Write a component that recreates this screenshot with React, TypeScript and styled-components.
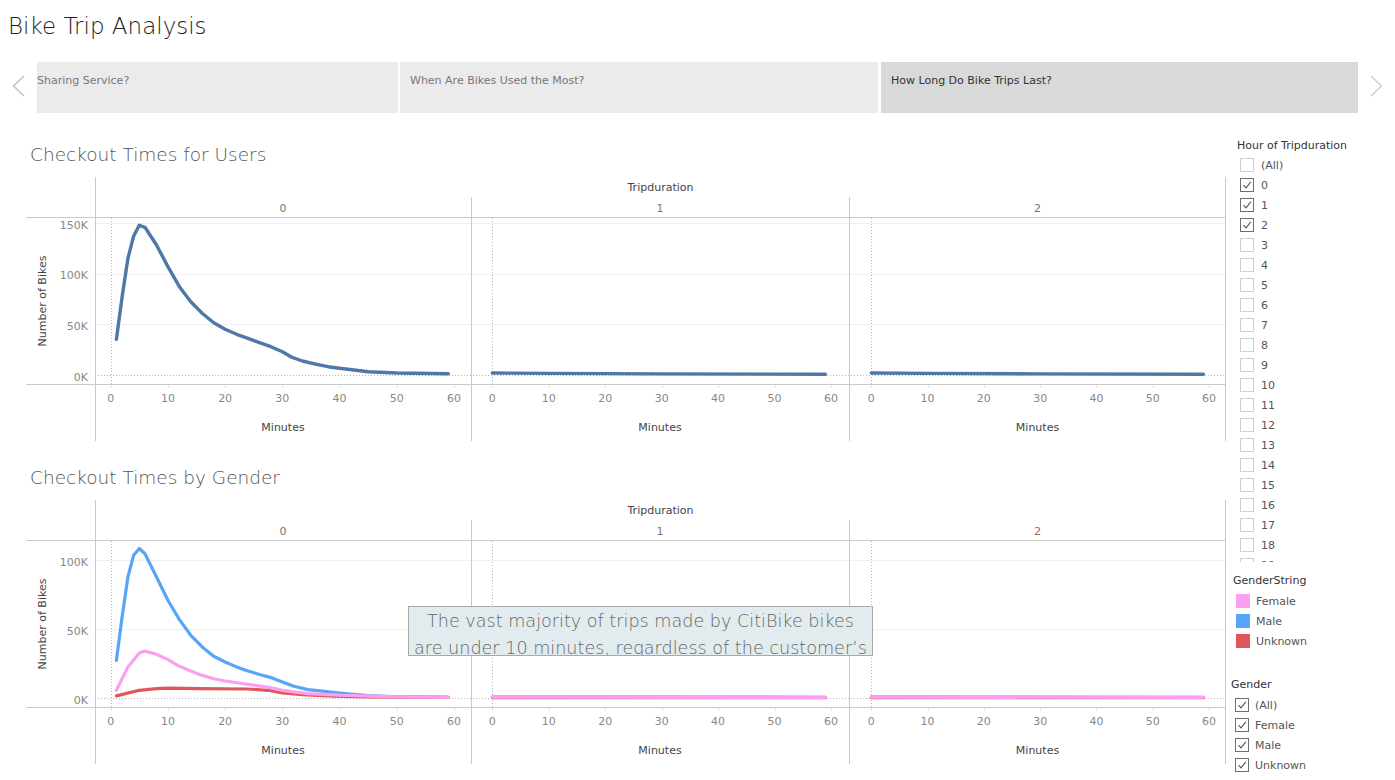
import React from 'react';
import styled, { createGlobalStyle } from 'styled-components';

const FONT = `"DejaVu Sans", Verdana, "Noto Sans", sans-serif`;

const GlobalStyle = createGlobalStyle`
  html, body { margin: 0; padding: 0; background: #ffffff; }
  body {
    font-family: ${FONT};
    color: #333;
    width: 1395px;
    height: 780px;
    overflow: hidden;
  }
  #root { width: 1395px; height: 780px; }
`;

const Page = styled.div`
  width: 1395px;
  height: 780px;
  overflow: hidden;
  display: flex;
  flex-direction: column;
`;

const Header = styled.header`
  height: 62px;
  flex: none;
`;

const Title = styled.h1`
  margin: 0;
  padding: 12px 0 0 8px;
  font-size: 23px;
  line-height: 28px;
  font-weight: 300;
  color: #222;
`;

const StoryNav = styled.nav`
  height: 51px;
  flex: none;
  display: flex;
  align-items: stretch;
`;

const NavArrow = styled.div`
  width: 37px;
  flex: none;
  display: flex;
  align-items: center;
  justify-content: center;
  padding-bottom: 4px;
  box-sizing: border-box;
`;

const StoryTab = styled.div<{ $w: number; $active?: boolean; $gap: number; $pad: number }>`
  width: ${(p) => p.$w}px;
  margin-left: ${(p) => p.$gap}px;
  flex: none;
  box-sizing: border-box;
  padding: 11px 0 0 ${(p) => p.$pad}px;
  background: ${(p) => (p.$active ? '#d9d9d9' : '#ebebeb')};
  color: ${(p) => (p.$active ? '#333' : '#777')};
  font-size: 11px;
  line-height: 16px;
  white-space: nowrap;
  overflow: hidden;
`;

const Main = styled.main`
  flex: 1;
  display: flex;
  min-height: 0;
`;

const ChartsColumn = styled.section`
  width: 1226px;
  flex: none;
  box-sizing: border-box;
  padding: 31px 0 0 26px;
  display: flex;
  flex-direction: column;
`;

const ChartBlock = styled.div<{ $top: number }>`
  margin-top: ${(p) => p.$top}px;
  display: flex;
  flex-direction: column;
  gap: 11px;
`;

const ChartTitle = styled.h2`
  margin: 0 0 0 4px;
  font-size: 18.5px;
  line-height: 22px;
  font-weight: 300;
  color: #555;
  white-space: nowrap;
`;

const ChartFrame = styled.div`
  position: relative;
  width: 1200px;
  height: 264px;
`;

const ChartSvg = styled.svg`
  display: block;
  font-family: ${FONT};
`;

const Annotation = styled.div`
  position: absolute;
  left: 382px;
  top: 106px;
  width: 465px;
  height: 50px;
  box-sizing: border-box;
  padding-top: 1px;
  background: #e2ecef;
  border: 1px solid #a9a9a9;
  color: #666;
  font-size: 17.6px;
  line-height: 27px;
  font-weight: 300;
  text-align: center;
  overflow: hidden;
`;

const Sidebar = styled.aside`
  flex: 1;
  display: flex;
  flex-direction: column;
  padding-top: 25px;
`;

const FilterTitle = styled.div<{ $indent: number; $top?: number }>`
  padding-left: ${(p) => p.$indent}px;
  margin-top: ${(p) => p.$top ?? 0}px;
  font-size: 11px;
  line-height: 16px;
  color: #333;
  white-space: nowrap;
  flex: none;
`;

const FilterList = styled.div<{ $indent: number; $height?: number; $top: number }>`
  padding-left: ${(p) => p.$indent}px;
  margin-top: ${(p) => p.$top}px;
  ${(p) => (p.$height ? `height: ${p.$height}px; overflow: hidden;` : '')}
  flex: none;
  display: flex;
  flex-direction: column;
`;

const FilterRow = styled.div<{ $gap: number }>`
  height: 20px;
  flex: none;
  display: flex;
  align-items: center;
  gap: ${(p) => p.$gap}px;
  font-size: 11px;
  color: #555;
  white-space: nowrap;
`;

const Box = styled.span<{ $checked: boolean }>`
  width: 14px;
  height: 14px;
  box-sizing: border-box;
  flex: none;
  border: 1px solid ${(p) => (p.$checked ? '#6e6e6e' : '#cfcfcf')};
  background: #fff;
  display: flex;
  align-items: center;
  justify-content: center;
`;

const Swatch = styled.span<{ $color: string }>`
  width: 14px;
  height: 14px;
  flex: none;
  background: ${(p) => p.$color};
`;

/* ---------------- chart ---------------- */

type Pt = [number, number];
type Series = { color: string; width: number; points: Pt[] };
type Pane = { label: string; x0: number; x60: number; series: Series[] };

const EDGES = [69, 445, 823, 1200];
const BASE = 198;

const LINE = '#c9c9c9';

function Facets({ panes, ticks, scale }: { panes: Pane[]; ticks: number[]; scale: number }) {
  const y = (v: number) => BASE - v * scale;
  return (
    <ChartSvg width={1200} height={264} viewBox="0 0 1200 264">
      {ticks
        .filter((t) => t > 0)
        .map((t) => (
          <line key={t} x1={69} x2={1200} y1={Math.round(y(t)) + 0.5} y2={Math.round(y(t)) + 0.5} stroke="#efefef" />
        ))}
      <line x1={69} x2={1200} y1={BASE + 0.5} y2={BASE + 0.5} stroke="#b5b5b5" strokeDasharray="1 2" />
      {ticks.map((t) => (
        <text key={t} x={62} y={y(t) + 2} textAnchor="end" dominantBaseline="central" fontSize={11} fill="#888">
          {t}K
        </text>
      ))}
      <text
        transform={`translate(16,124) rotate(-90)`}
        textAnchor="middle"
        dominantBaseline="central"
        fontSize={11}
        fill="#444"
      >
        Number of Bikes
      </text>
      <text x={634.5} y={10} textAnchor="middle" dominantBaseline="central" fontSize={11} fill="#444">
        Tripduration
      </text>
      {panes.map((p, i) => {
        const left = EDGES[i];
        const right = EDGES[i + 1];
        const sx = (m: number) => p.x0 + ((p.x60 - p.x0) * m) / 60;
        const zx = Math.round(sx(0)) + 0.5;
        return (
          <g key={i}>
            <text x={(left + right) / 2} y={31} textAnchor="middle" dominantBaseline="central" fontSize={11} fill="#777">
              {p.label}
            </text>
            <line x1={zx} x2={zx} y1={41} y2={207} stroke="#b5b5b5" strokeDasharray="1 2" />
            {[0, 10, 20, 30, 40, 50, 60].map((m) => (
              <g key={m}>
                <line x1={Math.round(sx(m)) + 0.5} x2={Math.round(sx(m)) + 0.5} y1={208} y2={211} stroke="#e2e2e2" />
                <text x={sx(m)} y={221} textAnchor="middle" dominantBaseline="central" fontSize={11} fill="#888">
                  {m}
                </text>
              </g>
            ))}
            <text x={(left + right) / 2} y={250} textAnchor="middle" dominantBaseline="central" fontSize={11} fill="#444">
              Minutes
            </text>
            {p.series.map((s, k) => (
              <polyline
                key={k}
                points={s.points.map(([m, v]) => `${sx(m).toFixed(1)},${y(v).toFixed(1)}`).join(' ')}
                fill="none"
                stroke={s.color}
                strokeWidth={s.width}
                strokeLinejoin="round"
                strokeLinecap="round"
              />
            ))}
          </g>
        );
      })}
      <line x1={69.5} x2={69.5} y1={0} y2={264} stroke={LINE} />
      <line x1={445.5} x2={445.5} y1={20} y2={264} stroke={LINE} />
      <line x1={823.5} x2={823.5} y1={20} y2={264} stroke={LINE} />
      <line x1={1199.5} x2={1199.5} y1={0} y2={264} stroke={LINE} />
      <line x1={0} x2={1200} y1={40.5} y2={40.5} stroke={LINE} />
      <line x1={0} x2={1200} y1={207.5} y2={207.5} stroke={LINE} />
    </ChartSvg>
  );
}

/* ---------------- data ---------------- */

const BLUE = '#4e79a7';
const MALE = '#58a4f6';
const FEMALE = '#fb9ff0';
const UNKNOWN = '#e15759';

const userPane0: Pt[] = [
  [1, 35.2], [2, 77], [3, 115], [4, 137], [5, 147.8], [6, 145.8], [7, 137], [8, 128.3],
  [10, 107], [12, 87.2], [14, 72.3], [16, 60.9], [18, 51.6], [20, 45.1], [22, 40.2],
  [24, 36.2], [26, 31.9], [28, 27.9], [30, 23], [31.5, 18], [33.5, 13.8], [36, 10.6],
  [38, 8.2], [40, 6.6], [42.5, 4.9], [45, 3.3], [47, 2.7], [50, 2], [59, 1.3],
];
const userFlat: Pt[] = [[0, 2], [10, 1.6], [30, 1.1], [59, 0.7]];

const male0: Pt[] = [
  [1, 27.3], [2, 58.7], [3, 87.7], [4, 103.4], [5, 108.3], [6, 104.6], [8, 87.7], [10, 70.8],
  [12, 56.8], [14, 45.4], [16, 37], [18, 30.2], [20, 26.1], [22, 22.5], [24, 19.6], [26, 17],
  [28, 14.8], [30, 11.6], [32, 8.5], [34.5, 6.1], [37, 4.9], [40, 3.6], [45, 1.7], [50, 0.9], [59, 0.4],
];
const female0: Pt[] = [
  [1, 5.6], [3, 22.5], [5, 32.6], [6, 34], [8, 31.7], [10, 27.8], [12, 23], [14, 19.6],
  [16, 16.4], [18, 14], [20, 12.3], [24, 9.9], [28, 7.5], [30, 5.6], [34.5, 3.2], [40, 2],
  [50, 0.9], [59, 0.4],
];
const unknown0: Pt[] = [
  [1, 1.5], [5, 5.6], [8, 6.8], [10, 7.2], [15.5, 6.8], [24, 6.5], [27.5, 5.6], [30, 3.6],
  [33.5, 2.5], [39, 1.4], [45, 0.9], [59, 0.4],
];
const flatMale: Pt[] = [[0, 0.9], [59, 0.5]];
const flatFemale: Pt[] = [[0, 0.7], [59, 0.4]];
const flatUnknown: Pt[] = [[0, 0.3], [59, 0.2]];

const PANE_X: [number, number][] = [
  [84.7, 428],
  [466.3, 805],
  [845.3, 1183],
];

const usersPanes: Pane[] = [
  { label: '0', x0: PANE_X[0][0], x60: PANE_X[0][1], series: [{ color: BLUE, width: 3.4, points: userPane0 }] },
  { label: '1', x0: PANE_X[1][0], x60: PANE_X[1][1], series: [{ color: BLUE, width: 3.4, points: userFlat }] },
  { label: '2', x0: PANE_X[2][0], x60: PANE_X[2][1], series: [{ color: BLUE, width: 3.4, points: userFlat }] },
];

const genderPanes: Pane[] = [
  {
    label: '0', x0: PANE_X[0][0], x60: PANE_X[0][1],
    series: [
      { color: MALE, width: 3.2, points: male0 },
      { color: UNKNOWN, width: 3.2, points: unknown0 },
      { color: FEMALE, width: 3.2, points: female0 },
    ],
  },
  {
    label: '1', x0: PANE_X[1][0], x60: PANE_X[1][1],
    series: [
      { color: MALE, width: 3.2, points: flatMale },
      { color: UNKNOWN, width: 3.2, points: flatUnknown },
      { color: FEMALE, width: 3.4, points: flatFemale },
    ],
  },
  {
    label: '2', x0: PANE_X[2][0], x60: PANE_X[2][1],
    series: [
      { color: MALE, width: 3.2, points: flatMale },
      { color: UNKNOWN, width: 3.2, points: flatUnknown },
      { color: FEMALE, width: 3.4, points: flatFemale },
    ],
  },
];

/* ---------------- small parts ---------------- */

function Chevron({ dir }: { dir: 'left' | 'right' }) {
  return (
    <svg width="13" height="22" viewBox="0 0 13 22">
      {dir === 'left' ? (
        <polyline points="12,1 1.5,11 12,21" fill="none" stroke="#b9b9b9" strokeWidth="1.2" />
      ) : (
        <polyline points="1,1 11.5,11 1,21" fill="none" stroke="#c9c9c9" strokeWidth="1.2" />
      )}
    </svg>
  );
}

function CheckBox({ checked }: { checked: boolean }) {
  return (
    <Box $checked={checked}>
      {checked && (
        <svg width="10" height="10" viewBox="0 0 10 10">
          <polyline points="1.5,5.2 4,7.8 8.8,1.8" fill="none" stroke="#555" strokeWidth="1.1" />
        </svg>
      )}
    </Box>
  );
}

const hourItems = ['(All)', ...Array.from({ length: 20 }, (_, i) => String(i))];
const hourChecked = new Set(['0', '1', '2']);

export default function App() {
  return (
    <Page>
      <GlobalStyle />
      <Header>
        <Title>Bike Trip Analysis</Title>
      </Header>
      <StoryNav>
        <NavArrow>
          <Chevron dir="left" />
        </NavArrow>
        <StoryTab $w={361} $gap={0} $pad={0}>Sharing Service?</StoryTab>
        <StoryTab $w={478} $gap={2} $pad={10}>When Are Bikes Used the Most?</StoryTab>
        <StoryTab $w={477} $gap={3} $pad={10} $active>How Long Do Bike Trips Last?</StoryTab>
        <NavArrow>
          <Chevron dir="right" />
        </NavArrow>
      </StoryNav>
      <Main>
        <ChartsColumn>
          <ChartBlock $top={0}>
            <ChartTitle>Checkout Times for Users</ChartTitle>
            <ChartFrame>
              <Facets panes={usersPanes} ticks={[0, 50, 100, 150]} scale={1.013} />
            </ChartFrame>
          </ChartBlock>
          <ChartBlock $top={26}>
            <ChartTitle>Checkout Times by Gender</ChartTitle>
            <ChartFrame>
              <Facets panes={genderPanes} ticks={[0, 50, 100]} scale={1.38} />
              <Annotation>
                The vast majority of trips made by CitiBike bikes
                <br />
                are under 10 minutes, regardless of the customer’s gender.
              </Annotation>
            </ChartFrame>
          </ChartBlock>
        </ChartsColumn>
        <Sidebar>
          <FilterTitle $indent={11}>Hour of Tripduration</FilterTitle>
          <FilterList $indent={14} $top={1} $height={407}>
            {hourItems.map((h) => (
              <FilterRow key={h} $gap={7}>
                <CheckBox checked={hourChecked.has(h)} />
                {h}
              </FilterRow>
            ))}
          </FilterList>
          <FilterTitle $indent={7} $top={11}>GenderString</FilterTitle>
          <FilterList $indent={10} $top={2}>
            <FilterRow $gap={6}>
              <Swatch $color={FEMALE} />
              Female
            </FilterRow>
            <FilterRow $gap={6}>
              <Swatch $color={MALE} />
              Male
            </FilterRow>
            <FilterRow $gap={6}>
              <Swatch $color={UNKNOWN} />
              Unknown
            </FilterRow>
          </FilterList>
          <FilterTitle $indent={5} $top={26}>Gender</FilterTitle>
          <FilterList $indent={9} $top={2}>
            {['(All)', 'Female', 'Male', 'Unknown'].map((g) => (
              <FilterRow key={g} $gap={6}>
                <CheckBox checked />
                {g}
              </FilterRow>
            ))}
          </FilterList>
        </Sidebar>
      </Main>
    </Page>
  );
}
